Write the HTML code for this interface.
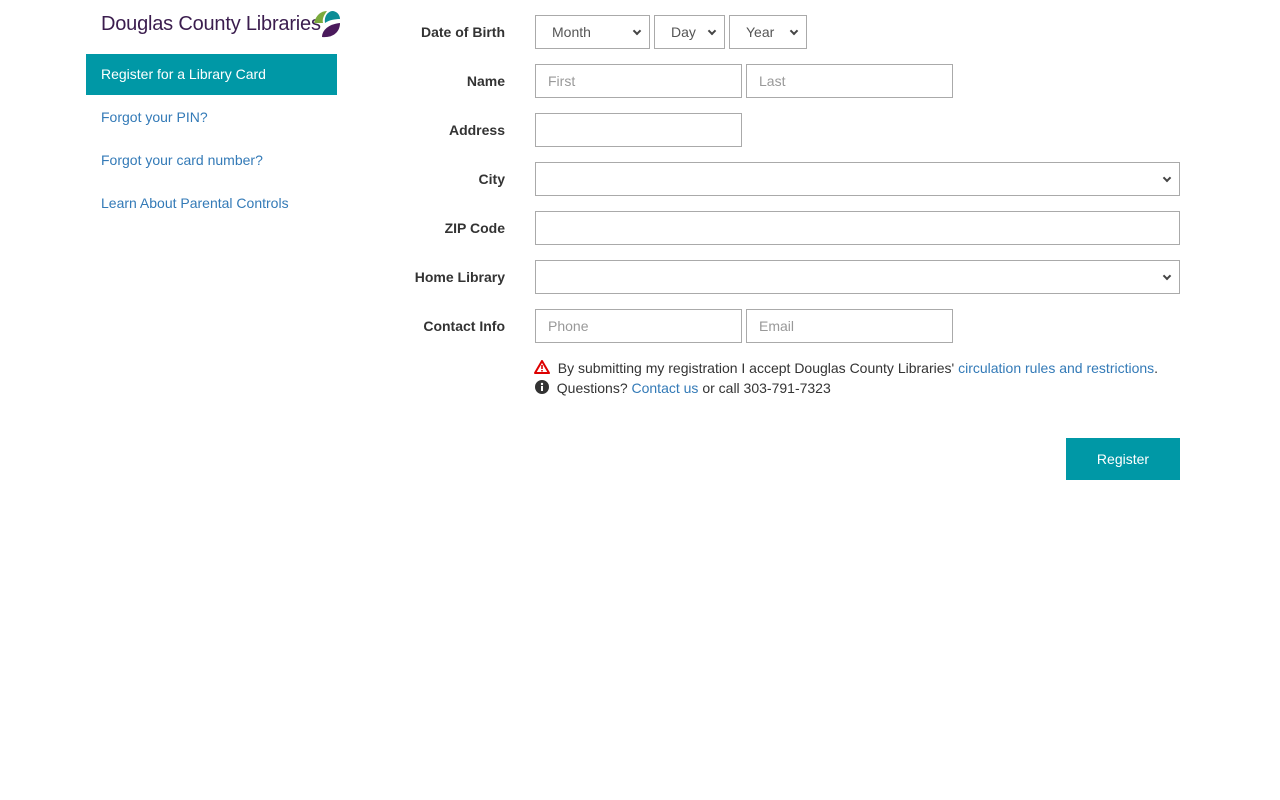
<!DOCTYPE html>
<html><head><meta charset="utf-8"><style>
body{margin:0;font-family:"Liberation Sans",sans-serif;font-size:14px;color:#333;background:#fff}
.logo{position:absolute;left:101px;top:13px;font-family:"Liberation Sans",sans-serif;font-size:20px;color:#3b1d4e;letter-spacing:-0.2px;white-space:nowrap}
.nav{position:absolute;left:86px;top:54px;width:251px}
.nav div{height:43px;line-height:45px;padding-left:15px;color:#337ab7}
.nav .act{background:#0098a6;color:#fff;height:41px;line-height:41px}
label{position:absolute;width:200px;left:305px;text-align:right;font-weight:bold}
.f{position:absolute;box-sizing:border-box;border:1px solid #aaa;height:34px;background:#fff;color:#999;padding:0 12px;line-height:32px;font-size:14px}
.sel{color:#555;padding-left:16px}
.sel:after{content:"";position:absolute;right:9px;top:12px;width:4px;height:4px;border-right:2px solid #444;border-bottom:2px solid #444;transform:rotate(45deg)}
a{color:#337ab7;text-decoration:none}
.btn{position:absolute;left:1066px;top:438px;width:114px;height:42px;background:#0098a6;color:#fff;text-align:center;line-height:42px}
</style></head><body>
<div class="logo">Douglas County Libraries</div>
<svg style="position:absolute;left:313px;top:9px" width="28" height="30" viewBox="0 0 28 30"><path d="M1 14 C3 6 8 2 14 2 C11 6 9 10 10 14Z" fill="#7aaa3c"/><path d="M12 14 C11 8 14 3 19 2 C24 2 27 6 27 10 C22 10 16 11 12 14Z" fill="#0b8d95"/><path d="M9 28 C9 21 16 15 27 14 C27 23 20 29 9 28Z" fill="#4a1a5c"/></svg>
<div class="nav"><div class="act">Register for a Library Card</div><div>Forgot your PIN?</div><div>Forgot your card number?</div><div>Learn About Parental Controls</div></div>

<label style="top:24px">Date of Birth</label>
<div class="f sel" style="left:535px;top:15px;width:115px">Month</div>
<div class="f sel" style="left:654px;top:15px;width:71px">Day</div>
<div class="f sel" style="left:729px;top:15px;width:78px">Year</div>

<label style="top:73px">Name</label>
<div class="f" style="left:535px;top:64px;width:207px">First</div>
<div class="f" style="left:746px;top:64px;width:207px">Last</div>

<label style="top:122px">Address</label>
<div class="f" style="left:535px;top:113px;width:207px"></div>

<label style="top:171px">City</label>
<div class="f sel" style="left:535px;top:162px;width:645px"></div>

<label style="top:220px">ZIP Code</label>
<div class="f" style="left:535px;top:211px;width:645px"></div>

<label style="top:269px">Home Library</label>
<div class="f sel" style="left:535px;top:260px;width:645px"></div>

<label style="top:318px">Contact Info</label>
<div class="f" style="left:535px;top:309px;width:207px">Phone</div>
<div class="f" style="left:746px;top:309px;width:207px">Email</div>

<div style="position:absolute;left:534px;top:358px;line-height:20px">
<div><svg width="16" height="14" viewBox="0 0 16 14" style="vertical-align:-1px"><path d="M8 1 L15 13 H1Z" fill="none" stroke="#d00" stroke-width="2" stroke-linejoin="round"/><rect x="7.2" y="5" width="1.6" height="4" fill="#d00"/><rect x="7.2" y="10" width="1.6" height="1.5" fill="#d00"/></svg>&nbsp; By submitting my registration I accept Douglas County Libraries' <a>circulation rules and restrictions</a>.</div>
<div style="padding-left:1px"><svg width="14" height="14" viewBox="0 0 14 14" style="vertical-align:-1px"><circle cx="7" cy="7" r="7" fill="#333"/><rect x="6" y="6" width="2" height="5" fill="#fff"/><circle cx="7" cy="4" r="1.2" fill="#fff"/></svg>&nbsp; Questions? <a>Contact us</a> or call 303-791-7323</div>
</div>
<div class="btn">Register</div>
</body></html>
